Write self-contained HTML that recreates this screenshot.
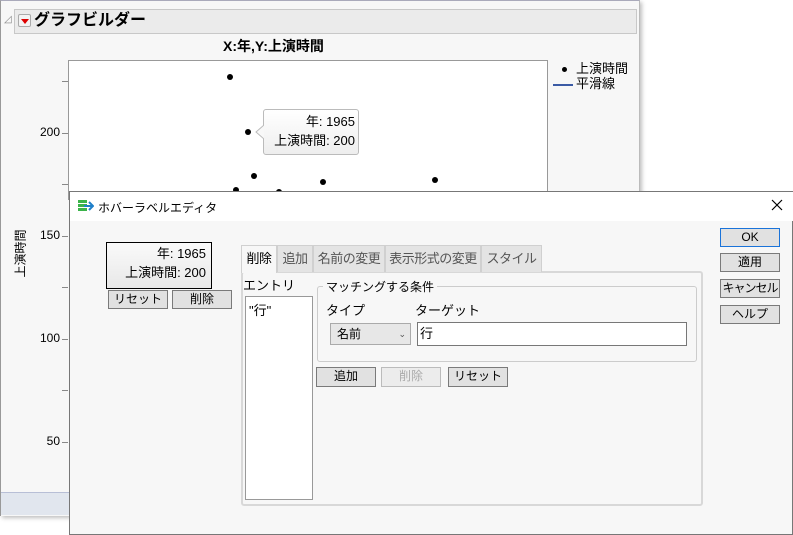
<!DOCTYPE html>
<html><head><meta charset="utf-8"><style>
*{box-sizing:border-box;margin:0;padding:0}
body{width:793px;height:535px;position:relative;overflow:hidden;background:#fff;font-family:"Liberation Sans","Noto Sans CJK JP",sans-serif;font-size:12px;color:#000}
.a{position:absolute}
.btn{position:absolute;background:#e1e1e1;border:1px solid #7a7a7a;text-align:center;font-size:12px;line-height:16px;white-space:nowrap;overflow:hidden}
.dot{position:absolute;width:6px;height:6px;border-radius:50%;background:#000}
.tab{position:absolute;top:245px;height:27px;background:#e4e4e4;border:1px solid #d0d0d0;border-bottom:none;color:#555;font-size:13px;line-height:26px;text-align:center;white-space:nowrap;letter-spacing:-0.5px}
.yl{position:absolute;right:733px;font-size:12px}
.tk{position:absolute;left:62px;width:6px;height:1px;background:#888}
</style></head><body>
<div class="a" style="left:0;top:0;width:640px;height:516px;background:#f7f7f7;border-left:1px solid #999;border-right:1px solid #bbb;border-top:1px solid #aab;box-shadow:2px 2px 4px rgba(0,0,0,.25)"></div>
<div class="a" style="left:1px;top:492px;width:638px;height:23px;background:#e1e6ee;border-top:1px solid #b8bfd6"></div>
<div class="a" style="left:4px;top:14px;font-size:10px;color:#888">◿</div>
<div class="a" style="left:14px;top:9px;width:623px;height:25px;background:#ebebeb;border:1px solid #c8c8c8"></div>
<div class="a" style="left:18px;top:14px;width:13px;height:13px;border:1px solid #aaa;background:#f3f3f3;border-radius:2px"></div>
<div class="a" style="left:21px;top:19px;width:0;height:0;border-left:4px solid transparent;border-right:4px solid transparent;border-top:5px solid #d00"></div>
<div class="a" style="left:34px;top:9px;font-size:16px;font-weight:bold;line-height:24px">グラフビルダー</div>
<div class="a" style="left:223px;top:36px;font-size:14px;font-weight:bold">X:年,Y:上演時間</div>
<div class="a" style="left:68px;top:60px;width:480px;height:140px;background:#fff;border:1px solid #999"></div>
<div class="tk" style="top:81px"></div><div class="tk" style="top:133px"></div><div class="tk" style="top:184px"></div><div class="tk" style="top:236px"></div><div class="tk" style="top:287px"></div><div class="tk" style="top:339px"></div><div class="tk" style="top:390px"></div><div class="tk" style="top:442px"></div>
<div class="yl" style="top:125px">200</div><div class="yl" style="top:228px">150</div><div class="yl" style="top:331px">100</div><div class="yl" style="top:434px">50</div>
<div class="a" style="left:-4px;top:245px;transform:rotate(-90deg);font-size:12px">上演時間</div>
<div class="dot" style="left:227px;top:74px"></div><div class="dot" style="left:245px;top:129px"></div><div class="dot" style="left:251px;top:173px"></div><div class="dot" style="left:320px;top:179px"></div><div class="dot" style="left:432px;top:177px"></div><div class="dot" style="left:233px;top:187px"></div><div class="dot" style="left:276px;top:189px"></div>
<div class="a" style="left:263px;top:109px;width:96px;height:46px;border:1px solid #bbb;border-radius:3px;background:linear-gradient(#fff,#eee);font-size:13px;line-height:19px;padding:2px 3px 0 0;text-align:right">年: 1965<br>上演時間: 200</div>
<svg class="a" style="left:255px;top:125px" width="9" height="14"><path d="M9 0 L1 7 L9 14" fill="#f8f8f8" stroke="#bbb"/></svg>
<div class="dot" style="left:562px;top:67px;width:5px;height:5px"></div>
<div class="a" style="left:553px;top:84px;width:20px;height:2px;background:#3b5ba5"></div>
<div class="a" style="left:576px;top:61px;font-size:13px;line-height:15px">上演時間<br>平滑線</div>
<div class="a" style="left:69px;top:191px;width:724px;height:344px;background:#f7f7f7;border:1px solid #777"></div>
<div class="a" style="left:70px;top:192px;width:723px;height:29px;background:#fff"></div>
<svg class="a" style="left:78px;top:199px" width="16" height="14"><rect x="0" y="1" width="9" height="3" fill="#3bb34a"/><rect x="0" y="5" width="9" height="3" fill="#3bb34a"/><rect x="0" y="9" width="9" height="3" fill="#3bb34a"/><path d="M6 7 L15 7 M11 3 L15 7 L11 11" stroke="#1f7fc9" stroke-width="2" fill="none"/></svg>
<div class="a" style="left:98px;top:199px;font-size:12px">ホバーラベルエディタ</div>
<svg class="a" style="left:771px;top:199px" width="12" height="12"><path d="M1 1 L11 11 M11 1 L1 11" stroke="#000" stroke-width="1.2"/></svg>
<div class="a" style="left:106px;top:242px;width:106px;height:47px;border:1px solid #000;background:linear-gradient(#fafafa,#e8e8e8);font-size:13px;line-height:19px;padding:1px 5px 0 0;text-align:right">年: 1965<br>上演時間: 200</div>
<div class="btn" style="left:108px;top:290px;width:60px;height:19px">リセット</div>
<div class="btn" style="left:172px;top:290px;width:60px;height:19px">削除</div>
<div class="a" style="left:241px;top:271px;width:462px;height:235px;border:2px solid #d8d8d8;border-radius:3px;background:#f7f7f7"></div>
<div class="tab" style="left:241px;width:36px;background:#f7f7f7;color:#000;height:28px">削除</div>
<div class="tab" style="left:277px;width:36px">追加</div>
<div class="tab" style="left:313px;width:72px">名前の変更</div>
<div class="tab" style="left:385px;width:96px">表示形式の変更</div>
<div class="tab" style="left:481px;width:61px">スタイル</div>
<div class="a" style="left:243px;top:275px;font-size:13px">エントリ</div>
<div class="a" style="left:245px;top:296px;width:68px;height:204px;background:#fff;border:1px solid #999;padding:3px 3px;font-size:13px">"行"</div>
<div class="a" style="left:317px;top:286px;width:380px;height:76px;border:1px solid #ccc;border-radius:3px"></div>
<div class="a" style="left:323px;top:278px;background:#f7f7f7;padding:0 3px;font-size:12px">マッチングする条件</div>
<div class="a" style="left:326px;top:300px;font-size:13px">タイプ</div>
<div class="a" style="left:415px;top:300px;font-size:13px">ターゲット</div>
<div class="a" style="left:330px;top:323px;width:81px;height:22px;border:1px solid #aaa;background:#e7e7e7;font-size:12px;line-height:20px;padding-left:6px">名前<span style="position:absolute;right:4px;font-size:9px;color:#555">⌄</span></div>
<div class="a" style="left:417px;top:322px;width:270px;height:24px;border:1px solid #777;background:#fff;font-size:13px;padding-left:2px">行</div>
<div class="btn" style="left:316px;top:367px;width:60px;height:20px">追加</div>
<div class="btn" style="left:381px;top:367px;width:60px;height:20px;color:#aaa;border-color:#bbb;background:#ececec">削除</div>
<div class="btn" style="left:448px;top:367px;width:60px;height:20px">リセット</div>
<div class="btn" style="left:720px;top:228px;width:60px;height:19px;border-color:#1a73d9">OK</div>
<div class="btn" style="left:720px;top:253px;width:60px;height:19px">適用</div>
<div class="btn" style="left:720px;top:279px;width:60px;height:19px;letter-spacing:-1px">キャンセル</div>
<div class="btn" style="left:720px;top:305px;width:60px;height:19px">ヘルプ</div>
</body></html>
